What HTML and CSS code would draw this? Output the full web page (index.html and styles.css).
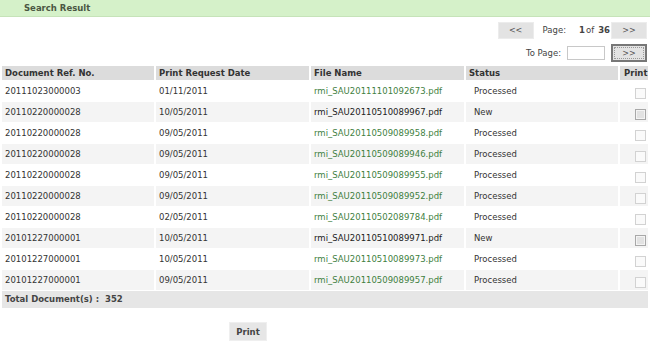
FILE: index.html
```html
<!DOCTYPE html>
<html lang="en">
<head>
    <meta charset="UTF-8">
    <title>Search Result</title>
    <link rel="stylesheet" href="styles.css">
</head>
<body>
    <div class="title-bar">Search Result</div>

    <div class="pager">
        <div class="pager-row">
            <button class="nav-btn">&lt;&lt;</button>
            <span class="page-label">Page:</span>
            <span class="page-num">1</span><span class="page-of">of</span>
            <span class="page-total">36</span>
            <button class="nav-btn">&gt;&gt;</button>
        </div>
        <div class="pager-row">
            <span class="page-label">To Page:</span>
            <input type="text" class="page-input">
            <button class="nav-btn go-btn">&gt;&gt;</button>
        </div>
    </div>

    <table class="results">
        <thead>
            <tr>
                <th class="col-ref">Document Ref. No.</th>
                <th class="col-date">Print Request Date</th>
                <th class="col-file">File Name</th>
                <th class="col-status">Status</th>
                <th class="col-print">Print</th>
            </tr>
        </thead>
        <tbody id="rows"></tbody>
        <tfoot>
            <tr>
                <td colspan="5">Total Document(s) :&nbsp; 352</td>
            </tr>
        </tfoot>
    </table>

    <div class="actions">
        <button class="print-btn">Print</button>
    </div>

    <script>
        const docs = [
            ["20111023000003", "01/11/2011", "rmi_SAU20111101092673.pdf", "Processed"],
            ["20110220000028", "10/05/2011", "rmi_SAU20110510089967.pdf", "New"],
            ["20110220000028", "09/05/2011", "rmi_SAU20110509089958.pdf", "Processed"],
            ["20110220000028", "09/05/2011", "rmi_SAU20110509089946.pdf", "Processed"],
            ["20110220000028", "09/05/2011", "rmi_SAU20110509089955.pdf", "Processed"],
            ["20110220000028", "09/05/2011", "rmi_SAU20110509089952.pdf", "Processed"],
            ["20110220000028", "02/05/2011", "rmi_SAU20110502089784.pdf", "Processed"],
            ["20101227000001", "10/05/2011", "rmi_SAU20110510089971.pdf", "New"],
            ["20101227000001", "10/05/2011", "rmi_SAU20110510089973.pdf", "Processed"],
            ["20101227000001", "09/05/2011", "rmi_SAU20110509089957.pdf", "Processed"]
        ];

        const tbody = document.getElementById("rows");
        docs.forEach(function (d) {
            let isNew = d[3] === "New";
            let tr = document.createElement("tr");
            tr.innerHTML = `<td>${d[0]}</td><td>${d[1]}</td>` +
                `<td class="${isNew ? "file" : "file done"}">${d[2]}</td>` +
                `<td class="status">${d[3]}</td>` +
                `<td class="check"><span class="box${isNew ? " active" : ""}"></span></td>`;
            tbody.appendChild(tr);
        });
    </script>
</body>
</html>
```

FILE: styles.css
```css
/* General */
body {
    margin: 0;
    font-family: 'DejaVu Sans', Verdana, sans-serif;
    font-size: 8.5px;
    line-height: 11px;
    color: #333;
    background: #fff;
}

/* Title bar */
.title-bar {
    height: 16px;
    line-height: 16px;
    background: #d5f1c9;
    border-bottom: 1px solid #c6e3b9;
    padding-left: 24px;
    font-weight: bold;
    color: #4a5642;
}

/* Pager */
.pager {
    display: flex;
    flex-direction: column;
    align-items: flex-end;
    gap: 5px;
    padding: 5px 3px 0 0;
}

.pager-row {
    display: flex;
    align-items: center;
}

.nav-btn {
    width: 36px;
    height: 17px;
    padding: 0;
    font-family: inherit;
    font-size: 8px;
    color: #555;
    background: #e3e3e3;
    border: 1px solid #ececec;
}

.page-label {
    color: #444;
    margin: 0 13px 0 9px;
}

.page-num {
    font-weight: bold;
    color: #444;
}

.page-of {
    color: #444;
    margin-left: 1px;
}

.page-total {
    font-weight: bold;
    color: #444;
    margin: 0 1px 0 4px;
}

.pager-row:nth-child(2) .page-label {
    margin: 0 6px 0 0;
}

.page-input {
    width: 36px;
    height: 12px;
    padding: 0;
    border: 1px solid #c8c8c8;
    margin-right: 6px;
}

.go-btn {
    border: 2px solid #777;
    outline: 1px dotted #999;
    outline-offset: -4px;
    height: 18px;
}

/* Results table */
.results {
    width: 100%;
    table-layout: fixed;
    border-collapse: separate;
    border-spacing: 2px 1px;
    margin-top: 3px;
}

.results th {
    background: #dcdcdc;
    text-align: left;
    font-weight: bold;
    color: #333;
    height: 14px;
    padding: 0 0 0 3px;
    white-space: nowrap;
}

.col-ref { width: 149px; }
.col-date { width: 150px; }
.col-file { width: 150px; }
.col-status { width: 149px; }

.results th.col-print { padding-left: 4px; }

.results tbody td {
    height: 20px;
    padding: 0 0 0 3px;
    color: #333;
    white-space: nowrap;
}

.results tbody tr:nth-child(even) td {
    background: #f4f4f4;
}

.results td.file {
    color: #222;
}

.results td.file.done {
    color: #3f7f3f;
}

.results td.status {
    padding-left: 8px;
}

.results td.check {
    padding: 0 0 0 15px;
    line-height: 0;
}

.box {
    display: inline-block;
    width: 9px;
    height: 9px;
    margin-top: 4px;
    border: 1px solid #d2d2d2;
    background: #fafafa;
}

.box.active {
    border-color: #a8a8a8;
    background: #e2e2e2;
    box-shadow: inset 0 0 0 1px #f4f4f4;
}

.results tfoot td {
    background: #e6e6e6;
    font-weight: bold;
    height: 15px;
    padding-left: 3px;
    color: #444;
}

/* Print button */
.actions {
    padding: 13px 0 0 229px;
}

.print-btn {
    width: 38px;
    height: 19px;
    padding: 0;
    font-family: inherit;
    font-size: 8.5px;
    font-weight: bold;
    color: #444;
    background: #e6e6e6;
    border: 1px solid #efefef;
}
```
